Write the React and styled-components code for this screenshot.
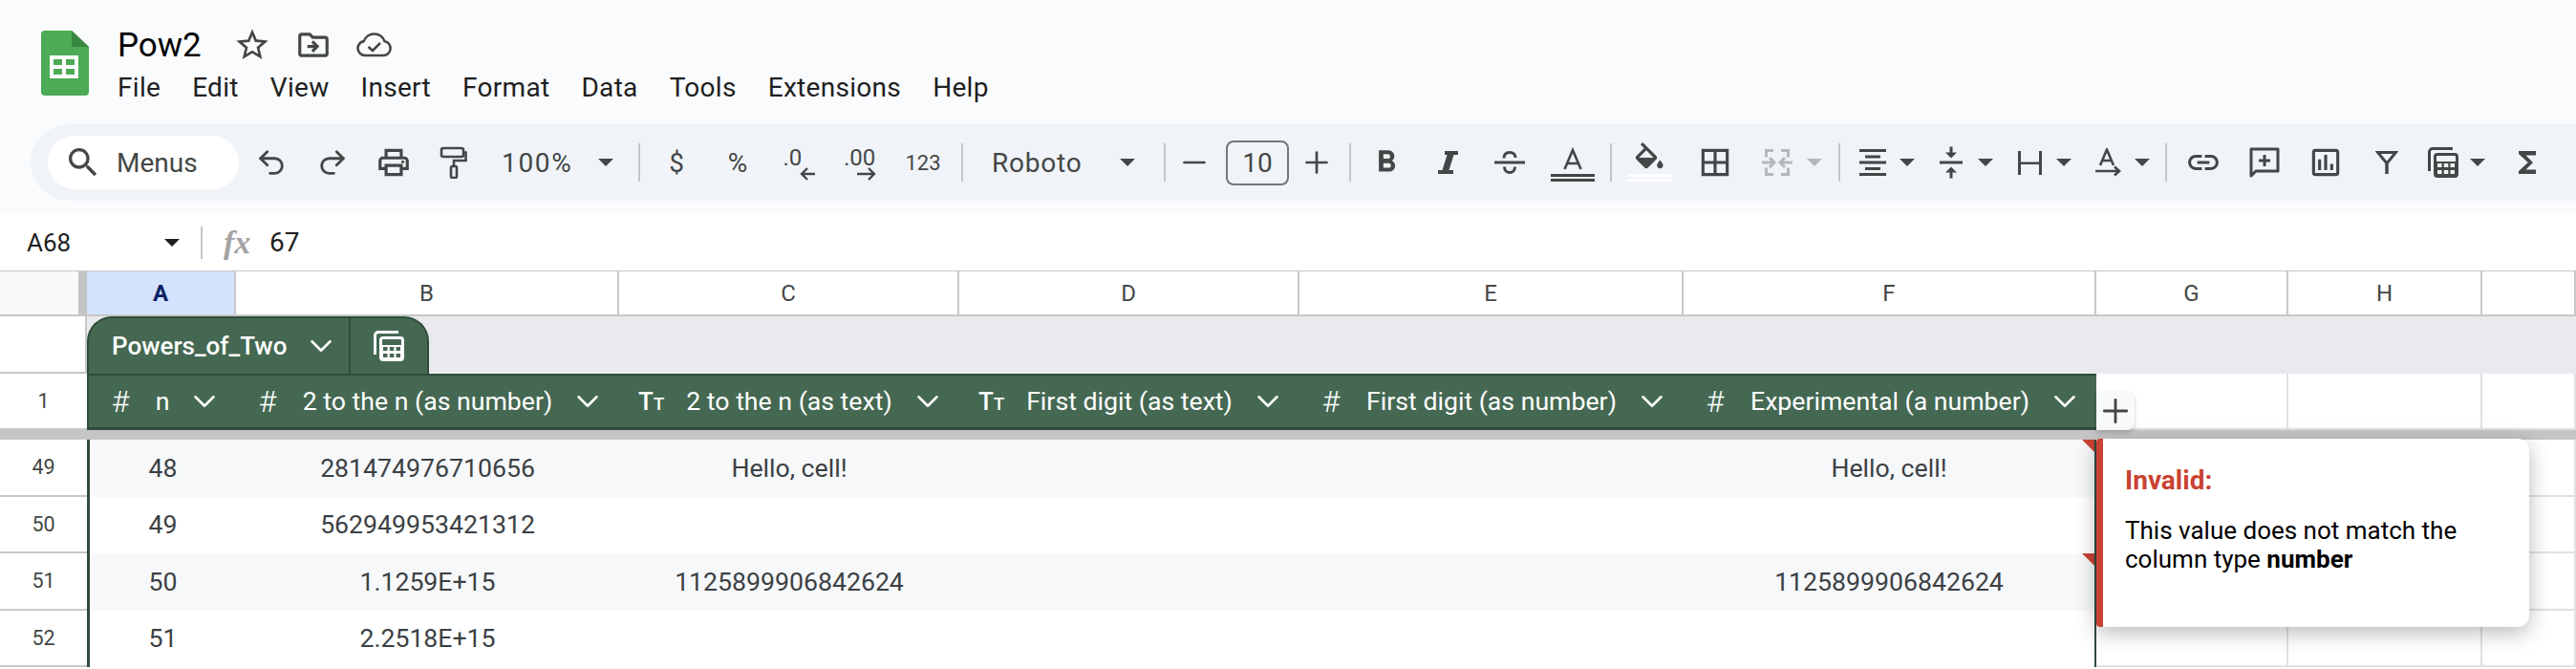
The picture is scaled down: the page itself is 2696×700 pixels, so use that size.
import React from "react";
import styled, { createGlobalStyle } from "styled-components";
import { ChevronDown, Minus, Plus, Redo2, Undo2 } from "lucide-react";
import {
  MdBorderAll,
  MdFormatBold,
  MdFunctions,
  MdLink,
  MdOutlineDriveFileMove,
  MdOutlineInsertChart,
  MdOutlinePrint,
  MdOutlineSearch,
  MdOutlineStarBorder,
  MdVerticalAlignCenter
} from "react-icons/md";

const INK = "#444746";
const GREEN = "#456852";
const GREEN_DARK = "#2f4c3b";
const GRID = "#c7c7c7";
const RED = "#c94233";
const COLUMNS = "91px 156px 401px 356px 356px 402px 432px 201px 203px 98px";

const GlobalStyle = createGlobalStyle`
  html, body {
    margin: 0;
    height: 700px;
    overflow: hidden;
    background: #fff;
    font-family: Roboto, "Liberation Sans", sans-serif;
  }
`;

const Page = styled.div`
  width: 2696px;
  height: 700px;
  overflow: hidden;
`;

const TopArea = styled.header`
  background: #f9fbfd;
  height: 224px;
  padding-top: 25px;
  box-sizing: border-box;
`;

const TitleArea = styled.div`
  display: flex;
  height: 105px;
  padding-left: 41px;
`;

const LogoSlot = styled.div`
  width: 82px;
  padding-top: 6px;
`;

const TitleColumn = styled.div`
  display: flex;
  flex-direction: column;
`;

const TitleRow = styled.div`
  display: flex;
  align-items: center;
  height: 44px;
`;

const DocName = styled.span`
  font-size: 35px;
  color: #000;
  width: 109px;
`;

const TitleIcon = styled.span`
  display: flex;
  justify-content: center;
  width: 64px;
  color: ${INK};
`;

const MenuBar = styled.nav`
  display: flex;
  align-items: center;
  height: 44px;
  gap: 33px;
`;

const MenuItem = styled.span`
  font-size: 28px;
  color: #1f1f1f;
  letter-spacing: 0.3px;
`;

const Toolbar = styled.div`
  display: flex;
  align-items: center;
  height: 80px;
  margin-left: 32px;
  padding-left: 18px;
  background: #f0f4f9;
  border-radius: 40px 0 0 40px;
  color: ${INK};
`;

const SearchPill = styled.div`
  display: flex;
  align-items: center;
  gap: 15px;
  box-sizing: border-box;
  width: 200px;
  height: 56px;
  margin-right: 2px;
  padding-left: 17px;
  background: #fff;
  border-radius: 28px;
  font-size: 28px;
`;

const ToolButton = styled.div`
  display: flex;
  flex: none;
  align-items: center;
  justify-content: center;
  box-sizing: border-box;
  width: ${(p) => p.$w || 64}px;
  height: 56px;
  color: ${(p) => (p.$muted ? "#b4b8bb" : INK)};
  font-size: ${(p) => p.$size || 28}px;
`;

const DropButton = styled.div`
  display: flex;
  flex: none;
  align-items: center;
  box-sizing: border-box;
  width: ${(p) => p.$w}px;
  height: 56px;
  padding-left: ${(p) => p.$pl}px;
  color: ${(p) => (p.$muted ? "#b4b8bb" : INK)};
`;

const DropIcon = styled.span`
  display: flex;
  justify-content: center;
  width: 44px;
`;

const DropCaret = styled.span`
  display: flex;
  justify-content: center;
  width: ${(p) => p.$w || 28}px;
`;

const Caret = styled.span`
  width: 0;
  height: 0;
  border-left: 8px solid transparent;
  border-right: 8px solid transparent;
  border-top: 8px solid currentColor;
`;

const TextSelect = styled.div`
  display: flex;
  flex: none;
  align-items: center;
  box-sizing: border-box;
  width: ${(p) => p.$w}px;
  height: 56px;
  padding-left: ${(p) => p.$pl}px;
  font-size: 28px;
  letter-spacing: ${(p) => p.$ls || 0}px;
`;

const SelectLabel = styled.span`
  width: ${(p) => p.$w}px;
`;

const Separator = styled.span`
  flex: none;
  width: 2px;
  height: 40px;
  margin: 0 6px;
  background: #c4c7c5;
`;

const FontSizeBox = styled.div`
  display: flex;
  flex: none;
  align-items: center;
  justify-content: center;
  box-sizing: border-box;
  width: 66px;
  height: 47px;
  margin-left: 9px;
  border: 2px solid #747775;
  border-radius: 8px;
  font-size: 28px;
`;

const DecimalGlyph = styled.span`
  display: flex;
  flex-direction: column;
  padding-top: 3px;
  font-size: 24px;
  line-height: 20px;

  svg {
    margin-left: ${(p) => p.$shift}px;
  }
`;

const FormulaBar = styled.div`
  display: flex;
  align-items: center;
  height: 59px;
  padding-left: 28px;
  background: #fff;
`;

const CellRef = styled.span`
  display: flex;
  align-items: center;
  justify-content: space-between;
  width: 160px;
  color: #1f1f1f;
  font-size: 26px;
`;

const FormulaSep = styled.span`
  width: 2px;
  height: 34px;
  margin: 0 22px 0 22px;
  background: #c4c7c5;
`;

const FxMark = styled.span`
  width: 48px;
  color: #a3a3a3;
  font-family: "Liberation Serif", serif;
  font-size: 34px;
  font-style: italic;
  font-weight: 700;
`;

const FormulaValue = styled.span`
  color: #1f1f1f;
  font-size: 28px;
`;

const Sheet = styled.section`
  position: relative;
`;

const GridRow = styled.div`
  display: grid;
  grid-template-columns: ${COLUMNS};
  height: ${(p) => p.$h}px;
  box-sizing: border-box;
`;

const HeaderRow = styled(GridRow)`
  border-top: 1px solid ${GRID};
  border-bottom: 2px solid ${GRID};
`;

const Corner = styled.div`
  background: #f8f9fa;
  border-right: 9px solid #c4c4c4;
`;

const ColHead = styled.div`
  display: flex;
  align-items: center;
  justify-content: center;
  border-right: 2px solid ${GRID};
  color: ${(p) => (p.$active ? "#0b2265" : INK)};
  background: ${(p) => (p.$active ? "#d3e3fd" : "#fff")};
  font-size: 24px;
  font-weight: ${(p) => (p.$active ? 700 : 400)};
`;

const TabRow = styled.div`
  display: flex;
  height: 60px;
`;

const TabGutter = styled.div`
  flex: none;
  box-sizing: border-box;
  width: 91px;
  border-right: 2px solid ${GRID};
  border-bottom: 2px solid ${GRID};
`;

const TabBand = styled.div`
  flex: 1;
  display: flex;
  align-items: flex-end;
  background: #e8eaed;
`;

const TableTab = styled.div`
  display: flex;
  align-items: center;
  box-sizing: border-box;
  width: 358px;
  height: 60px;
  background: ${GREEN};
  border: 2px solid ${GREEN_DARK};
  border-bottom: none;
  border-radius: 26px 26px 0 0;
  color: #fff;
`;

const TabName = styled.div`
  display: flex;
  align-items: center;
  box-sizing: border-box;
  width: 274px;
  height: 100%;
  padding-left: 24px;
  border-right: 2px solid ${GREEN_DARK};
  font-size: 26px;
  font-weight: 500;
`;

const TabChevron = styled.span`
  display: flex;
  justify-content: center;
  width: 40px;
  margin-left: 16px;
`;

const TabAction = styled.div`
  flex: 1;
  display: flex;
  justify-content: center;
`;

const RowGutter = styled.div`
  display: flex;
  align-items: center;
  justify-content: center;
  border-bottom: 2px solid ${GRID};
  color: ${INK};
  font-size: 21.5px;
`;

const TableHead = styled.div`
  display: flex;
  align-items: center;
  box-sizing: border-box;
  padding: 0 20px;
  background: ${GREEN};
  border-top: 2px solid ${GREEN_DARK};
  border-bottom: 3px solid ${GREEN_DARK};
  border-left: ${(p) => (p.$first ? `2px solid ${GREEN_DARK}` : "none")};
  color: #fff;
`;

const TypeMark = styled.span`
  flex: none;
  width: 26px;
  font-size: ${(p) => (p.$text ? 26 : 32)}px;
  font-weight: ${(p) => (p.$text ? 500 : 300)};
  text-align: center;
  white-space: nowrap;
`;

const SmallCap = styled.span`
  font-size: 19px;
`;

const HeadLabel = styled.span`
  flex: 1;
  font-size: 26.67px;
  text-align: center;
  white-space: nowrap;
`;

const HeadChevron = styled.span`
  flex: none;
  display: flex;
  justify-content: center;
  width: 26px;

  svg {
    flex: none;
  }
`;

const BlankCell = styled.div`
  position: relative;
  background: #fff;
  border-right: 2px solid #e1e1e1;
  border-bottom: 2px solid #e1e1e1;
`;

const AddColumn = styled.div`
  position: absolute;
  top: 19px;
  left: 0;
  display: flex;
  align-items: center;
  justify-content: center;
  width: 40px;
  height: 40px;
  background: #f9fafc;
  border-radius: 0 8px 8px 0;
  box-shadow: 0 2px 4px rgba(0, 0, 0, 0.2);
  color: ${INK};
`;

const FreezeBar = styled.div`
  height: 10px;
  background: #c5c5c5;
`;

const DataRow = styled.div`
  display: grid;
  grid-template-columns: ${COLUMNS};
  height: 59.5px;
`;

const DataCell = styled.div`
  position: relative;
  display: flex;
  align-items: center;
  justify-content: center;
  background: ${(p) => (p.$band ? "#f6f8fa" : "#fff")};
  border-left: ${(p) => (p.$first ? `3px solid ${GREEN_DARK}` : "none")};
  border-right: ${(p) => (p.$last ? `2px solid ${GREEN_DARK}` : "none")};
  color: #3c4043;
  font-size: 26.67px;

  ${(p) =>
    p.$invalid &&
    `&::after {
      content: "";
      position: absolute;
      top: 0;
      right: 0;
      border-top: 13px solid ${RED};
      border-left: 13px solid transparent;
    }`}
`;

const InvalidNote = styled.aside`
  position: absolute;
  top: 176px;
  left: 2194px;
  box-sizing: border-box;
  width: 453px;
  height: 197px;
  padding: 28px 30px 0 23px;
  background: #fff;
  border-left: 7px solid ${RED};
  border-radius: 4px 12px 12px 4px;
  box-shadow: 0 6px 22px rgba(0, 0, 0, 0.28);
`;

const NoteTitle = styled.div`
  margin-bottom: 21px;
  color: ${RED};
  font-size: 28px;
  font-weight: 700;
  line-height: 32px;
`;

const NoteBody = styled.div`
  color: #000;
  font-size: 26px;
  line-height: 30px;
`;

const SheetsLogo = () => (
  <svg width="54" height="70" viewBox="-2 -1 54 70">
    <path d="M4 0H32L50 17V64a4 4 0 0 1-4 4H4a4 4 0 0 1-4-4V4a4 4 0 0 1 4-4Z" fill="#4cab54" />
    <path d="M32 0L50 17H32Z" fill="#38873f" />
    <path d="M9 26H39V50H9Z" fill="#fff" />
    <path d="M13 30H22V36H13ZM26 30H35V36H26ZM13 40H22V46H13ZM26 40H35V46H26Z" fill="#4cab54" />
  </svg>
);

const CloudDoneIcon = () => (
  <svg width="38" height="26" viewBox="0 0 38 26" fill="none" stroke="currentColor" strokeWidth="2.600">
    <path d="M9 24a7.500 7.500 0 0 1-1.200-14.900A11.500 11.500 0 0 1 29.500 9.200 7.500 7.500 0 0 1 29 24Z" strokeLinejoin="round" />
    <path d="M12.500 15l4.500 4 8-8" />
  </svg>
);

const PaintIcon = () => (
  <svg width="30" height="34" viewBox="0 0 30 34" fill="none" stroke="currentColor" strokeWidth="2.600" style={{ marginRight: 4 }}>
    <rect x="3" y="2" width="23" height="9" rx="2" />
    <path d="M26 6.500h2.500V15H16v6" />
    <rect x="13" y="21" width="6" height="12" rx="1.500" />
  </svg>
);

const ItalicIcon = () => (
  <svg width="21" height="24" viewBox="0 0 21 24" fill="currentColor">
    <path d="M7 0h14v4h-4.500l-5 16H16v4H0v-4h4.500l5-16H7Z" />
  </svg>
);

const StrikeIcon = () => (
  <svg width="32" height="24" viewBox="0 0 32 24" fill="none" stroke="currentColor" strokeWidth="3">
    <path d="M0 12h32" />
    <path d="M10 7.500C10 3.500 12.500 1.500 16 1.500S22 3.500 22 7M10.500 16.500c0 4 2.500 6 5.500 6s5.500-2 5.500-6" />
  </svg>
);

const TextColorIcon = () => (
  <svg width="46" height="44" viewBox="0 0 46 44" fill="currentColor">
    <path d="M14.500 29L23 9l8.500 20M17.500 23h11" fill="none" stroke="currentColor" strokeWidth="2.600" />
    <path d="M0 34h46v3H0ZM0 39h46v3H0Z" />
  </svg>
);

const FillColorIcon = () => (
  <svg width="46" height="44" viewBox="0 0 46 44">
    <path
      transform="translate(3 1) scale(1.6)"
      fill="currentColor"
      d="M16.560 8.940L7.620 0 6.210 1.410l2.380 2.380-5.150 5.150c-.59.59-.59 1.540 0 2.120l5.500 5.500c.29.29.68.44 1.060.44s.77-.15 1.060-.44l5.500-5.500c.59-.58.59-1.530 0-2.120zM5.210 10L10 5.210 14.790 10H5.210zM19 11.500s-2 2.170-2 3.500c0 1.100.9 2 2 2s2-.9 2-2c0-1.330-2-3.500-2-3.500z"
    />
    <path d="M0 34h46v3H0ZM0 39h46v3H0Z" fill="#fff" />
  </svg>
);

const MergeIcon = () => (
  <svg width="32" height="28" viewBox="0 0 32 28" fill="none" stroke="currentColor" strokeWidth="3">
    <path d="M12 1.500H4.500v7M20 1.500h7.500v7M12 26.500H4.500v-7M20 26.500h7.500v-7" />
    <path d="M0 14h12M8 9l5 5-5 5M32 14H20M24 9l-5 5 5 5" />
  </svg>
);

const AlignIcon = () => (
  <svg width="28" height="28" viewBox="0 0 28 28" fill="currentColor">
    <path d="M0 0h28v3H0ZM6 6.500h16v3H6ZM0 12.500h28v3H0ZM6 19h16v3H6ZM0 25h28v3H0Z" />
  </svg>
);

const WrapIcon = () => (
  <svg width="25" height="25" viewBox="0 0 25 25" fill="currentColor">
    <path d="M0 0h3v25H0ZM22 0h3v25h-3ZM3 11.500h19v2.500H3Z" />
  </svg>
);

const RotateIcon = () => (
  <svg width="28" height="30" viewBox="0 0 28 30" fill="none" stroke="currentColor" strokeWidth="2.600">
    <path d="M6 18L13 1.500 20 18M8.500 13h9" />
    <path d="M1 24h24M21 19.500l5 4.500-5 4.500" />
  </svg>
);

const CommentIcon = () => (
  <svg width="32" height="32" viewBox="0 0 32 32" fill="none" stroke="currentColor" strokeWidth="3">
    <path d="M2 2h28v23H7l-5 5Z" strokeLinejoin="round" />
    <path d="M16 8v12M10 14h12" />
  </svg>
);

const FilterIcon = () => (
  <svg width="24" height="24" viewBox="0 0 24 24" fill="none" stroke="currentColor">
    <path d="M2.500 1.500h19L12 13Z" strokeWidth="3" />
    <path d="M12 12v12" strokeWidth="3.500" />
  </svg>
);

const TableIcon = ({ cell }) => (
  <svg width="32" height="32" viewBox="0 0 32 32">
    <path d="M26 1.500H5a3.500 3.500 0 0 0-3.500 3.500v20" fill="none" stroke="currentColor" strokeWidth="3" />
    <rect x="7.500" y="7.500" width="23" height="23" rx="2.500" fill="none" stroke="currentColor" strokeWidth="3" />
    <rect x="7.500" y="15" width="23" height="15" fill="currentColor" />
    <path
      d="M10 17h4.500v4H10ZM16.800 17h4.500v4h-4.500ZM23.500 17H28v4h-4.500ZM10 24h4.500v4H10ZM16.800 24h4.500v4h-4.500ZM23.500 24H28v4h-4.500Z"
      fill={cell}
    />
  </svg>
);

const ArrowLeft = () => (
  <svg width="16" height="14" viewBox="0 0 16 14" fill="none" stroke="currentColor" strokeWidth="2.400">
    <path d="M16 7H2M8 1L2 7l6 6" />
  </svg>
);

const ArrowRight = () => (
  <svg width="20" height="14" viewBox="0 0 20 14" fill="none" stroke="currentColor" strokeWidth="2.400">
    <path d="M0 7h18M12 1l6 6-6 6" />
  </svg>
);

const MENUS = ["File", "Edit", "View", "Insert", "Format", "Data", "Tools", "Extensions", "Help"];

const LETTERS = ["A", "B", "C", "D", "E", "F", "G", "H", ""];

const TABLE_COLUMNS = [
  { label: "n", text: false },
  { label: "2 to the n (as number)", text: false },
  { label: "2 to the n (as text)", text: true },
  { label: "First digit (as text)", text: true },
  { label: "First digit (as number)", text: false },
  { label: "Experimental (a number)", text: false }
];

const ROWS = [
  { id: 49, cells: ["48", "281474976710656", "Hello, cell!", "", "", "Hello, cell!"], invalid: true },
  { id: 50, cells: ["49", "562949953421312", "", "", "", ""] },
  { id: 51, cells: ["50", "1.1259E+15", "1125899906842624", "", "", "1125899906842624"], invalid: true },
  { id: 52, cells: ["51", "2.2518E+15", "", "", "", ""] }
];

const App = () => (
  <Page>
    <GlobalStyle />
    <TopArea>
      <TitleArea>
        <LogoSlot>
          <SheetsLogo />
        </LogoSlot>
        <TitleColumn>
          <TitleRow>
            <DocName>Pow2</DocName>
            <TitleIcon>
              <MdOutlineStarBorder size={40} />
            </TitleIcon>
            <TitleIcon>
              <MdOutlineDriveFileMove size={38} />
            </TitleIcon>
            <TitleIcon>
              <CloudDoneIcon />
            </TitleIcon>
          </TitleRow>
          <MenuBar>
            {MENUS.map((item) => (
              <MenuItem key={item}>{item}</MenuItem>
            ))}
          </MenuBar>
        </TitleColumn>
      </TitleArea>
      <Toolbar>
        <SearchPill>
          <MdOutlineSearch size={40} />
          Menus
        </SearchPill>
        <ToolButton>
          <Undo2 size={34} strokeWidth={2} />
        </ToolButton>
        <ToolButton>
          <Redo2 size={34} strokeWidth={2} />
        </ToolButton>
        <ToolButton>
          <MdOutlinePrint size={38} />
        </ToolButton>
        <ToolButton>
          <PaintIcon />
        </ToolButton>
        <TextSelect $w={154} $pl={17} $ls={1.7}>
          <SelectLabel $w={101}>100%</SelectLabel>
          <Caret />
        </TextSelect>
        <Separator />
        <ToolButton>$</ToolButton>
        <ToolButton>%</ToolButton>
        <ToolButton>
          <DecimalGlyph $shift={17}>
            <span>.0</span>
            <ArrowLeft />
          </DecimalGlyph>
        </ToolButton>
        <ToolButton>
          <DecimalGlyph $shift={14}>
            <span>.00</span>
            <ArrowRight />
          </DecimalGlyph>
        </ToolButton>
        <ToolButton $w={68} $size={22}>
          123
        </ToolButton>
        <Separator />
        <TextSelect $w={198} $pl={24} $ls={0.8}>
          <SelectLabel $w={134}>Roboto</SelectLabel>
          <Caret />
        </TextSelect>
        <Separator />
        <ToolButton $w={48}>
          <Minus size={36} strokeWidth={1.8} />
        </ToolButton>
        <FontSizeBox>10</FontSizeBox>
        <ToolButton $w={57}>
          <Plus size={36} strokeWidth={1.8} />
        </ToolButton>
        <Separator />
        <ToolButton $w={62}>
          <MdFormatBold size={38} />
        </ToolButton>
        <ToolButton $w={66}>
          <ItalicIcon />
        </ToolButton>
        <ToolButton>
          <StrikeIcon />
        </ToolButton>
        <ToolButton $w={67}>
          <TextColorIcon />
        </ToolButton>
        <Separator />
        <ToolButton $w={68}>
          <FillColorIcon />
        </ToolButton>
        <ToolButton $w={68}>
          <MdBorderAll size={38} />
        </ToolButton>
        <DropButton $w={89} $pl={11} $muted>
          <DropIcon>
            <MergeIcon />
          </DropIcon>
          <DropCaret $w={40}>
            <Caret />
          </DropCaret>
        </DropButton>
        <Separator />
        <DropButton $w={78} $pl={6}>
          <DropIcon>
            <AlignIcon />
          </DropIcon>
          <DropCaret>
            <Caret />
          </DropCaret>
        </DropButton>
        <DropButton $w={82} $pl={10}>
          <DropIcon>
            <MdVerticalAlignCenter size={36} />
          </DropIcon>
          <DropCaret>
            <Caret />
          </DropCaret>
        </DropButton>
        <DropButton $w={82} $pl={10}>
          <DropIcon>
            <WrapIcon />
          </DropIcon>
          <DropCaret>
            <Caret />
          </DropCaret>
        </DropButton>
        <DropButton $w={86} $pl={10}>
          <DropIcon>
            <RotateIcon />
          </DropIcon>
          <DropCaret>
            <Caret />
          </DropCaret>
        </DropButton>
        <Separator />
        <ToolButton>
          <MdLink size={38} />
        </ToolButton>
        <ToolButton>
          <CommentIcon />
        </ToolButton>
        <ToolButton>
          <MdOutlineInsertChart size={38} />
        </ToolButton>
        <ToolButton>
          <FilterIcon />
        </ToolButton>
        <DropButton $w={83} $pl={5}>
          <DropIcon>
            <TableIcon cell="#f0f4f9" />
          </DropIcon>
          <DropCaret>
            <Caret />
          </DropCaret>
        </DropButton>
        <ToolButton>
          <MdFunctions size={36} />
        </ToolButton>
      </Toolbar>
    </TopArea>

    <FormulaBar>
      <CellRef>
        A68
        <Caret />
      </CellRef>
      <FormulaSep />
      <FxMark>fx</FxMark>
      <FormulaValue>67</FormulaValue>
    </FormulaBar>

    <Sheet>
      <HeaderRow $h={48}>
        <Corner />
        {LETTERS.map((letter, i) => (
          <ColHead key={i} $active={letter === "A"}>
            {letter}
          </ColHead>
        ))}
      </HeaderRow>

      <TabRow>
        <TabGutter />
        <TabBand>
          <TableTab>
            <TabName>
              Powers_of_Two
              <TabChevron>
                <ChevronDown size={38} strokeWidth={1.6} />
              </TabChevron>
            </TabName>
            <TabAction>
              <TableIcon cell={GREEN} />
            </TabAction>
          </TableTab>
        </TabBand>
      </TabRow>

      <GridRow $h={59}>
        <RowGutter>1</RowGutter>
        {TABLE_COLUMNS.map((col, i) => (
          <TableHead key={col.label} $first={i === 0}>
            <TypeMark $text={col.text}>
              {col.text ? (
                <>
                  T<SmallCap>T</SmallCap>
                </>
              ) : (
                "#"
              )}
            </TypeMark>
            <HeadLabel>{col.label}</HeadLabel>
            <HeadChevron>
              <ChevronDown size={38} strokeWidth={1.6} />
            </HeadChevron>
          </TableHead>
        ))}
        <BlankCell>
          <AddColumn>
            <Plus size={40} strokeWidth={1.7} />
          </AddColumn>
        </BlankCell>
        <BlankCell />
        <BlankCell />
      </GridRow>

      <FreezeBar />

      {ROWS.map((row, r) => (
        <DataRow key={row.id}>
          <RowGutter>{row.id}</RowGutter>
          {row.cells.map((value, i) => (
            <DataCell
              key={i}
              $band={r % 2 === 0}
              $first={i === 0}
              $last={i === 5}
              $invalid={row.invalid && i === 5}
            >
              {value}
            </DataCell>
          ))}
          <BlankCell />
          <BlankCell />
          <BlankCell />
        </DataRow>
      ))}

      <InvalidNote>
        <NoteTitle>Invalid:</NoteTitle>
        <NoteBody>
          This value does not match the column type <b>number</b>
        </NoteBody>
      </InvalidNote>
    </Sheet>
  </Page>
);

export default App;
